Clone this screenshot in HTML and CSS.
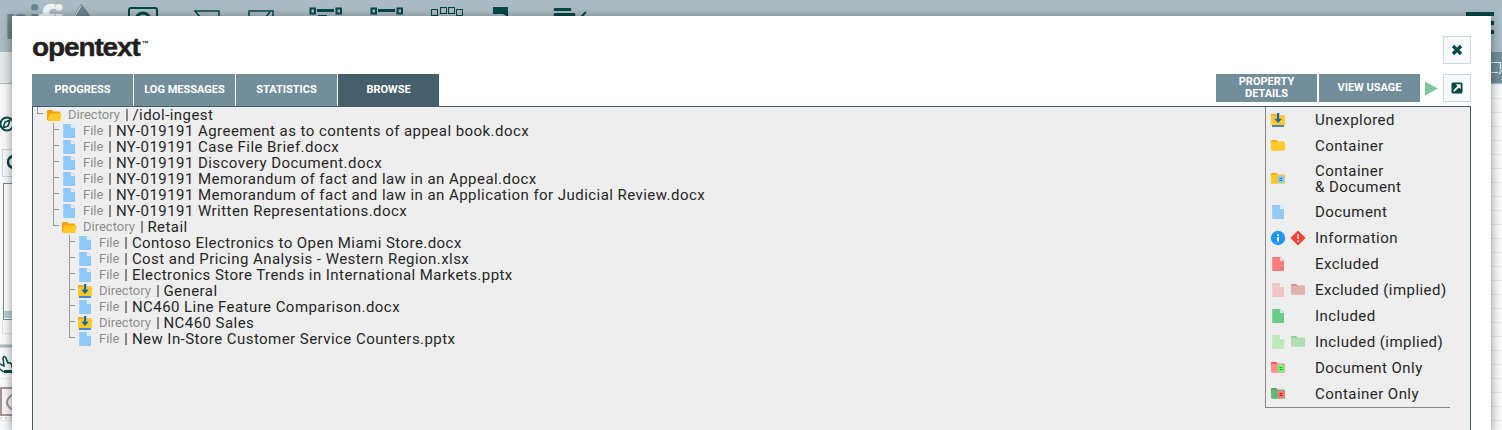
FILE: index.html
```html
<!DOCTYPE html>
<html lang="en">
<head>
<meta charset="utf-8">
<title>Browse</title>
<link rel="stylesheet" href="styles.css">
</head>
<body>
<svg class="defs" aria-hidden="true">
  <symbol id="doc" viewBox="0 0 16 16"><path class="f" d="M2.200 1h8.300L14 4.500V15H2.200z"/><path d="M10 .9v4.200h4z" fill="#fff" opacity=".75"/></symbol>
  <symbol id="folder" viewBox="0 0 16 16"><path class="b" d="M1 3q0-1 1-1h4.200l1.500 1.700H14v6H1z"/><path class="f" d="M1 4.600q0-.9 1-.9h12q1 0 1 1v7q0 1-1 1H2q-1 0-1-1z"/></symbol>
  <symbol id="open" viewBox="0 0 16 16"><path d="M1 4q0-1 1-1h4l1.500 1.500H13q1 0 1 1V13H1z" fill="#ffa000"/><path d="M3.800 6.500H15q.8 0 .6.800l-1.100 6q-.2.700-1 .7H1.300z" fill="#ffca28"/></symbol>
  <symbol id="unexp" viewBox="0 0 16 16"><path d="M1 3q0-1 1-1h4l1.500 1.500H14V12H1z" fill="#ffa000"/><path d="M1 4.500l1-1h12q1 0 1 1V13H1z" fill="#ffca28"/><path d="M7 1h2.200v5.800h2.600L8.100 11 4.400 6.800H7z" fill="#1565c0"/><path d="M2 13h12v2H2z" fill="#4a83c8"/></symbol>
  <symbol id="info" viewBox="0 0 16 16"><circle cx="8" cy="8" r="7.200" fill="#2196f3"/><path d="M7.100 4.200h1.900v1.700H7.100zM7.100 7h1.900v4.600H7.100z" fill="#fff"/></symbol>
  <symbol id="warn" viewBox="0 0 16 16"><path d="M8 .4 15.600 8 8 15.600.4 8z" fill="#f44336"/><path d="M7.200 4h1.700v5H7.200zM7.200 10.200h1.700v1.700H7.200z" fill="#ffd5d0"/></symbol>
  <symbol id="mini" viewBox="0 0 16 16"><path class="m" d="M8 4.500h4.500L14.500 6.500V12H8z"/><path class="ml" d="M9.500 7h3v1h-3zm0 2h3v1h-3z"/></symbol>
</svg>

<div class="app" aria-hidden="true">
  <div class="app-header">
    <svg width="1502" height="52">
      <text class="brand" x="5" y="39" textLength="60">ni<tspan fill="#eef2f4">fi</tspan></text>
      <path d="M81 4q15 15 11 30H70Q69 21 81 4z" fill="#6c8791"/><path d="M81 6q-4 6-7 12" stroke="#dce5e8" fill="none"/>
      <g fill="none" stroke="#004849" stroke-width="1.500">
        <rect x="129" y="8" width="28" height="28" rx="2" stroke-width="2"/><circle cx="143" cy="20" r="7" stroke-width="3"/>
        <path d="M194 11h25v20M195 11l5 6M249 30V11h24v20M270 12l-5 6"/>
        <g stroke-width="2"><rect x="310.500" y="8.500" width="4.500" height="5"/><rect x="336.500" y="8.500" width="4.500" height="5"/><rect x="371.500" y="8.500" width="4.500" height="5"/><rect x="397.500" y="8.500" width="4.500" height="5"/><path d="M317 10.500h17M378 10.500h17" stroke-width="3"/><path d="M318 16h9"/></g>
        <g stroke-width="1"><rect x="431.500" y="9.500" width="6" height="6"/><rect x="440.500" y="7.500" width="6" height="6"/><rect x="448.500" y="7.500" width="6" height="6"/><rect x="456.500" y="9.500" width="6" height="6"/></g>
        <path d="M555 9.500h15M555 14.500h19" stroke-width="3" stroke-linecap="round"/><path d="M580 18l6-6" stroke-width="2"/>
      </g>
      <path d="M493 7h15v10l-5-3h-10z" fill="#004849"/>
      <path d="M1466 12h28v4h-28zM1466 21h28v4h-28zM1466 30h28v4h-28z" fill="#004849"/>
    </svg>
  </div>
  <div class="app-crumbs"><div class="crumb-left"></div><div class="crumb-right"><svg width="11" height="32"><path d="M0 10.500h9.500v7M0 20.500h7M8 22l3-4" stroke="#e8eef0" stroke-width="1.200" fill="none"/></svg></div></div>
  <div class="app-canvas">
    <svg width="14" height="346">
      <rect width="14" height="290" fill="#f9fafb" opacity=".8"/>
      <circle cx="7" cy="40" r="6.500" fill="none" stroke="#004849" stroke-width="2"/><path d="M10 36l-2 6-5 2 2-6z" fill="none" stroke="#004849" stroke-width="1.500"/>
      <rect x="2.500" y="65.500" width="20" height="27" fill="#f9fafb" stroke="#c9d9d9"/><circle cx="14" cy="78" r="6" fill="none" stroke="#004849" stroke-width="2.500"/>
      <rect x="3.500" y="99.500" width="20" height="136" fill="#fff" stroke="#728e9b"/><path d="M4 227h10v7H4z" fill="#b8d4d6"/>
      <path d="M2.500 236v13.500H14" stroke="#dbe3e6" fill="none"/><path d="M0 262h14" stroke="#aabbc3" stroke-width="3"/>
      <path d="M0 280l4 2-1-8q1-3 3 0l2 5q4-1 4 4h2M0 285q4 4 6 3" fill="none" stroke="#004849" stroke-width="1.500"/><path d="M4 286h10v3H4z" fill="#004849"/>
      <rect x="1" y="304" width="20" height="27" fill="#f9f7f7" stroke="#ab9593" stroke-width="2"/><path d="M13 310q-12 9 0 16" stroke="#a79693" stroke-width="2" fill="none"/><path d="M0 334h14" stroke="#cbb" stroke-dasharray="2 3"/>
    </svg>
  </div>
</div>

<main class="dialog">
  <div class="top">
    <div class="logo"><span class="word">opentext</span><span class="tm">™</span></div>
    <button class="square"><svg width="12" height="12" viewBox="0 0 12 12"><path d="M2 2l8 8M10 2l-8 8" stroke="#004849" stroke-width="3.200"/></svg></button>
  </div>
  <div class="bar">
    <div class="tabs"><span class="tab">PROGRESS</span><span class="tab">LOG MESSAGES</span><span class="tab">STATISTICS</span><span class="tab active">BROWSE</span></div>
    <div class="actions">
      <span class="act">PROPERTY<br>DETAILS</span><span class="act">VIEW USAGE</span>
      <svg class="play" width="13" height="15"><path d="M0 .5 13 7.500 0 14.500z" fill="#7dc7a0"/></svg>
      <button class="square"><svg width="12" height="12" viewBox="0 0 12 12"><rect x=".5" y=".5" width="11" height="11" rx="1.500" fill="#004849"/><path d="M2.800 9.200 7.500 4.500" stroke="#fff" stroke-width="1.800"/><path d="M4.700 2.300h5v5z" fill="#fff"/></svg></button>
    </div>
  </div>
  <section class="panel">
    <ul class="tree">
      <li><div class="row"><svg class="ic"><use href="#open"/></svg><span class="kind">Directory</span><span class="name">/idol-ingest</span></div>
        <ul>
          <li><div class="row"><svg class="ic blue"><use href="#doc"/></svg><span class="kind">File</span><span class="name">NY-019191 Agreement as to contents of appeal book.docx</span></div></li>
          <li><div class="row"><svg class="ic blue"><use href="#doc"/></svg><span class="kind">File</span><span class="name">NY-019191 Case File Brief.docx</span></div></li>
          <li><div class="row"><svg class="ic blue"><use href="#doc"/></svg><span class="kind">File</span><span class="name">NY-019191 Discovery Document.docx</span></div></li>
          <li><div class="row"><svg class="ic blue"><use href="#doc"/></svg><span class="kind">File</span><span class="name">NY-019191 Memorandum of fact and law in an Appeal.docx</span></div></li>
          <li><div class="row"><svg class="ic blue"><use href="#doc"/></svg><span class="kind">File</span><span class="name">NY-019191 Memorandum of fact and law in an Application for Judicial Review.docx</span></div></li>
          <li><div class="row"><svg class="ic blue"><use href="#doc"/></svg><span class="kind">File</span><span class="name">NY-019191 Written Representations.docx</span></div></li>
          <li><div class="row"><svg class="ic"><use href="#open"/></svg><span class="kind">Directory</span><span class="name">Retail</span></div>
            <ul>
              <li><div class="row"><svg class="ic blue"><use href="#doc"/></svg><span class="kind">File</span><span class="name">Contoso Electronics to Open Miami Store.docx</span></div></li>
              <li><div class="row"><svg class="ic blue"><use href="#doc"/></svg><span class="kind">File</span><span class="name">Cost and Pricing Analysis - Western Region.xlsx</span></div></li>
              <li><div class="row"><svg class="ic blue"><use href="#doc"/></svg><span class="kind">File</span><span class="name">Electronics Store Trends in International Markets.pptx</span></div></li>
              <li><div class="row"><svg class="ic"><use href="#unexp"/></svg><span class="kind">Directory</span><span class="name">General</span></div></li>
              <li><div class="row"><svg class="ic blue"><use href="#doc"/></svg><span class="kind">File</span><span class="name">NC460 Line Feature Comparison.docx</span></div></li>
              <li><div class="row"><svg class="ic"><use href="#unexp"/></svg><span class="kind">Directory</span><span class="name">NC460 Sales</span></div></li>
              <li><div class="row"><svg class="ic blue"><use href="#doc"/></svg><span class="kind">File</span><span class="name">New In-Store Customer Service Counters.pptx</span></div></li>
            </ul>
          </li>
        </ul>
      </li>
    </ul>
    <div class="legend">
      <div class="key"><span class="icons"><svg class="ic"><use href="#unexp"/></svg></span><span>Unexplored</span></div>
      <div class="key"><span class="icons"><svg class="ic yellow"><use href="#folder"/></svg></span><span>Container</span></div>
      <div class="key tall"><span class="icons"><svg class="ic yellow bluedoc"><use href="#folder"/><use href="#mini"/></svg></span><span>Container<br>&amp; Document</span></div>
      <div class="key"><span class="icons"><svg class="ic blue"><use href="#doc"/></svg></span><span>Document</span></div>
      <div class="key"><span class="icons"><svg class="ic"><use href="#info"/></svg><svg class="ic"><use href="#warn"/></svg></span><span>Information</span></div>
      <div class="key"><span class="icons"><svg class="ic red"><use href="#doc"/></svg></span><span>Excluded</span></div>
      <div class="key"><span class="icons"><svg class="ic pale-red"><use href="#doc"/></svg><svg class="ic dim-red"><use href="#folder"/></svg></span><span>Excluded (implied)</span></div>
      <div class="key"><span class="icons"><svg class="ic green"><use href="#doc"/></svg></span><span>Included</span></div>
      <div class="key"><span class="icons"><svg class="ic pale-green"><use href="#doc"/></svg><svg class="ic dim-green"><use href="#folder"/></svg></span><span>Included (implied)</span></div>
      <div class="key"><span class="icons"><svg class="ic redfolder greendoc"><use href="#folder"/><use href="#mini"/></svg></span><span>Document Only</span></div>
      <div class="key"><span class="icons"><svg class="ic greenfolder reddoc"><use href="#folder"/><use href="#mini"/></svg></span><span>Container Only</span></div>
    </div>
  </section>
</main>
</body>
</html>
```
FILE: styles.css
```css
* { box-sizing: border-box; }
body { margin: 0; height: 430px; overflow: hidden; position: relative; font-family: Roboto, sans-serif; color: #262626; }
.defs { position: absolute; width: 0; height: 0; }
svg { display: block; flex: none; }
ul { list-style: none; margin: 0; padding: 0; }

.app-header { height: 52px; background: #aabbc3; }
.brand { font: 700 46px Roboto, sans-serif; font-variant-ligatures: none; fill: #6c8791; }
.app-crumbs { height: 32px; display: flex; justify-content: space-between; border-bottom: 1px solid #aabbc3; }
.crumb-left { flex: 1; background: #e3e8eb; }
.crumb-right { width: 22px; background: #728e9b; padding-left: 11px; }
.app-canvas { height: 346px; background: repeating-linear-gradient(to bottom, #e5ebed 0 1px, transparent 1px 14px), #f9fafb; }

.dialog { position: absolute; left: 12px; top: 16px; width: 1479px; height: 414px; background: #fff; padding: 20px 20px 0; box-shadow: 0 2px 10px rgba(0, 0, 0, .45); }
.top { display: flex; justify-content: space-between; height: 38px; }
.logo { display: flex; font: 700 25px/23px "Liberation Sans", sans-serif; letter-spacing: -1px; color: #231f20; }
.word { width: 110px; transform: scaleX(1.12); transform-origin: 0 0; -webkit-text-stroke: .4px #231f20; }
.tm { font-size: 7px; line-height: 15px; letter-spacing: 0; }
.square { width: 28px; height: 28px; padding: 0; border: 1px solid #ccdadb; background: #f9fafb; display: flex; align-items: center; justify-content: center; }
.bar { display: flex; justify-content: space-between; height: 32px; }
.tabs { display: flex; gap: 1px; }
.tab, .act { width: 101px; background: #728e9b; color: #fff; font-size: 11px; font-weight: 700; line-height: 12px; text-align: center; display: flex; align-items: center; justify-content: center; }
.active { background: #465f6c; }
.actions { display: flex; height: 28px; }
.act { margin-right: 2px; }
.play { margin: 7px 5px 0 3px; }

.panel { height: 324px; border: 1px solid #3f5c67; border-bottom: 0; background: #eee; display: flex; justify-content: space-between; font-size: 15px; line-height: 16px; letter-spacing: .45px; }
.tree { flex: 1; }
.tree ul { padding-left: 16px; }
.tree li { position: relative; }
.tree li::before { content: ""; position: absolute; left: 4px; top: 0; bottom: 0; border-left: 1px solid #999; }
.tree li:last-child::before { bottom: auto; height: 7px; }
.tree li::after { content: ""; position: absolute; left: 4px; top: 6px; width: 6px; border-top: 1px solid #999; }
.row { display: flex; align-items: center; height: 16px; padding-left: 13px; white-space: nowrap; }
.tree ul .row { padding-left: 12px; }
.ic { width: 16px; height: 16px; }
.kind { margin-left: 6px; padding-right: 6px; font-size: 13px; letter-spacing: 0; color: #8e8e8e; }
.name { display: flex; align-items: center; }
.name::before { content: ""; width: 2px; height: 12px; background: #888; margin-right: 4.5px; }

.legend { width: 185px; height: 301px; margin-right: 20px; border: solid #888; border-width: 0 0 1px 1px; }
.key { height: 26px; display: flex; align-items: center; }
.tall { height: 40px; }
.icons { display: flex; gap: 4px; width: 49px; padding-left: 4px; }
.f { fill: var(--f, #ffca28); } .b { fill: var(--b, #ffa000); } .m { fill: var(--m); } .ml { fill: var(--ml); }
.blue { --f: #90caf9; }
.red { --f: #ff7b7b; }
.green { --f: #66cc88; }
.pale-red { --f: #efc6c6; }
.pale-green { --f: #bce8bb; }
.dim-red { --f: #e0b1b1; --b: #d09090; }
.dim-green { --f: #b0deb3; --b: #8fd095; }
.redfolder { --f: #ff8f8f; --b: #ff5050; }
.greenfolder { --f: #66b877; --b: #45a95d; }
.bluedoc { --m: #90caf9; --ml: #1976d2; }
.greendoc { --m: #73ff73; --ml: #00c800; }
.reddoc { --m: #ff7777; --ml: #f00000; }
```
